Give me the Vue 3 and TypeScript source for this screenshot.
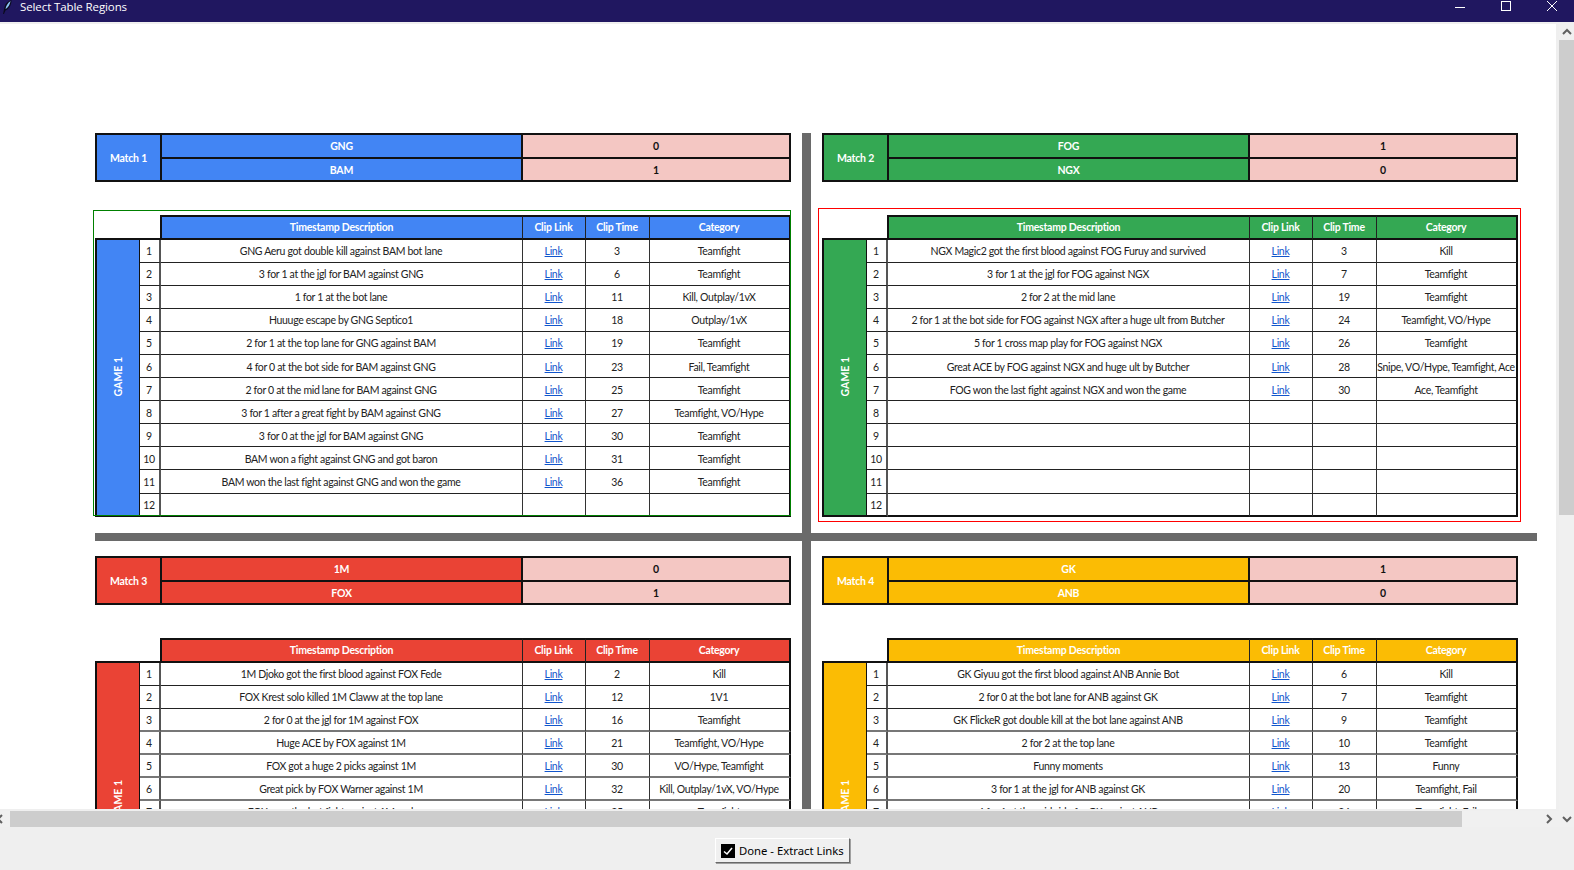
<script setup lang="ts">
interface Row {
  desc: string
  time: number
  cat: string
}

interface Match {
  label: string
  color: string
  teams: [string, number][]
  rows: Row[]
  outline?: 'saved' | 'active'
}

const rowNumbers = Array.from({ length: 12 }, (_, i) => i + 1)

const matches: Match[] = [
  {
    label: 'Match 1',
    color: '#4285f4',
    outline: 'saved',
    teams: [['GNG', 0], ['BAM', 1]],
    rows: [
      { desc: 'GNG Aeru got double kill against BAM bot lane', time: 3, cat: 'Teamfight' },
      { desc: '3 for 1 at the jgl for BAM against GNG', time: 6, cat: 'Teamfight' },
      { desc: '1 for 1 at the bot lane', time: 11, cat: 'Kill, Outplay/1vX' },
      { desc: 'Huuuge escape by GNG Septico1', time: 18, cat: 'Outplay/1vX' },
      { desc: '2 for 1 at the top lane for GNG against BAM', time: 19, cat: 'Teamfight' },
      { desc: '4 for 0 at the bot side for BAM against GNG', time: 23, cat: 'Fail, Teamfight' },
      { desc: '2 for 0 at the mid lane for BAM against GNG', time: 25, cat: 'Teamfight' },
      { desc: '3 for 1 after a great fight by BAM against GNG', time: 27, cat: 'Teamfight, VO/Hype' },
      { desc: '3 for 0 at the jgl for BAM against GNG', time: 30, cat: 'Teamfight' },
      { desc: 'BAM won a fight against GNG and got baron', time: 31, cat: 'Teamfight' },
      { desc: 'BAM won the last fight against GNG and won the game', time: 36, cat: 'Teamfight' },
    ],
  },
  {
    label: 'Match 2',
    color: '#34a853',
    outline: 'active',
    teams: [['FOG', 1], ['NGX', 0]],
    rows: [
      { desc: 'NGX Magic2 got the first blood against FOG Furuy and survived', time: 3, cat: 'Kill' },
      { desc: '3 for 1 at the jgl for FOG against NGX', time: 7, cat: 'Teamfight' },
      { desc: '2 for 2 at the mid lane', time: 19, cat: 'Teamfight' },
      { desc: '2 for 1 at the bot side for FOG against NGX after a huge ult from Butcher', time: 24, cat: 'Teamfight, VO/Hype' },
      { desc: '5 for 1 cross map play for FOG against NGX', time: 26, cat: 'Teamfight' },
      { desc: 'Great ACE by FOG against NGX and huge ult by Butcher', time: 28, cat: 'Snipe, VO/Hype, Teamfight, Ace' },
      { desc: 'FOG won the last fight against NGX and won the game', time: 30, cat: 'Ace, Teamfight' },
    ],
  },
  {
    label: 'Match 3',
    color: '#ea4335',
    teams: [['1M', 0], ['FOX', 1]],
    rows: [
      { desc: '1M Djoko got the first blood against FOX Fede', time: 2, cat: 'Kill' },
      { desc: 'FOX Krest solo killed 1M Claww at the top lane', time: 12, cat: '1V1' },
      { desc: '2 for 0 at the jgl for 1M against FOX', time: 16, cat: 'Teamfight' },
      { desc: 'Huge ACE by FOX against 1M', time: 21, cat: 'Teamfight, VO/Hype' },
      { desc: 'FOX got a huge 2 picks against 1M', time: 30, cat: 'VO/Hype, Teamfight' },
      { desc: 'Great pick by FOX Warner against 1M', time: 32, cat: 'Kill, Outplay/1vX, VO/Hype' },
      { desc: 'FOX won the last fight against 1M and won', time: 35, cat: 'Teamfight' },
    ],
  },
  {
    label: 'Match 4',
    color: '#fbbc04',
    teams: [['GK', 1], ['ANB', 0]],
    rows: [
      { desc: 'GK Giyuu got the first blood against ANB Annie Bot', time: 6, cat: 'Kill' },
      { desc: '2 for 0 at the bot lane for ANB against GK', time: 7, cat: 'Teamfight' },
      { desc: 'GK FlickeR got double kill at the bot lane against ANB', time: 9, cat: 'Teamfight' },
      { desc: '2 for 2 at the top lane', time: 10, cat: 'Teamfight' },
      { desc: 'Funny moments', time: 13, cat: 'Funny' },
      { desc: '3 for 1 at the jgl for ANB against GK', time: 20, cat: 'Teamfight, Fail' },
      { desc: '4 for 1 at the mid side for GK against ANB', time: 24, cat: 'Teamfight, Fail' },
    ],
  },
]

// the lower tables were captured scaled, their later row lines come out thick and grey
function rowClass(matchIndex: number, n: number) {
  return { bottom: n === 12, soft: matchIndex > 1 && n > 2 }
}
</script>

<template>
  <div class="window">
    <header class="titlebar">
      <svg class="feather" width="10" height="14" viewBox="0 0 10 14">
        <path d="M1 14 L2.5 7 C3.5 3 6 1 9.5 0 C9.5 4 8 8.5 3.5 10.5 L2 14 Z" fill="#0b0b20" />
        <path d="M3.5 9 C4 6 5.5 3 8.5 1 C8 3.5 7 7 3.5 9 Z" fill="#8cc4f5" />
      </svg>
      <span class="title">Select Table Regions</span>
      <div class="controls">
        <svg width="10" height="10" viewBox="0 0 10 10"><path d="M0 6.5H10" stroke="#fff" /></svg>
        <svg width="10" height="10" viewBox="0 0 10 10"><rect x="0.5" y="0.5" width="9" height="9" fill="none" stroke="#fff" /></svg>
        <svg width="10" height="10" viewBox="0 0 10 10"><path d="M0 0L10 10M10 0L0 10" stroke="#fff" /></svg>
      </div>
    </header>

    <div class="workspace">
      <div class="main">
        <div class="viewport">
          <div class="sheet">
            <section
              v-for="(m, i) in matches"
              :key="m.label"
              class="panel"
              :style="{ '--tone': m.color }"
            >
              <div class="summary">
                <div class="match-label">{{ m.label }}</div>
                <template v-for="t in m.teams" :key="t[0]">
                  <div class="team">{{ t[0] }}</div>
                  <div class="score">{{ t[1] }}</div>
                </template>
              </div>

              <div class="board">
                <div class="corner"></div>
                <div class="head first">Timestamp Description</div>
                <div class="head">Clip Link</div>
                <div class="head">Clip Time</div>
                <div class="head last">Category</div>
                <div class="game"><span>GAME 1</span></div>
                <template v-for="n in rowNumbers" :key="n">
                  <div class="cell num" :class="rowClass(i, n)">{{ n }}</div>
                  <div class="cell" :class="rowClass(i, n)">{{ m.rows[n - 1]?.desc }}</div>
                  <div class="cell" :class="rowClass(i, n)">
                    <a v-if="m.rows[n - 1]" class="link">Link</a>
                  </div>
                  <div class="cell" :class="rowClass(i, n)">{{ m.rows[n - 1]?.time }}</div>
                  <div class="cell last" :class="rowClass(i, n)">{{ m.rows[n - 1]?.cat }}</div>
                </template>
              </div>

              <div v-if="m.outline" class="outline" :class="m.outline"></div>
            </section>
            <div class="rule-v"></div>
            <div class="rule-h"></div>
          </div>
        </div>
        <div class="hbar">
          <svg class="arrow-left" width="8" height="10" viewBox="0 0 8 10"><path d="M6 1L2 5L6 9" fill="none" stroke="#606060" stroke-width="2" /></svg>
          <div class="hthumb"></div>
          <svg class="arrow-right" width="8" height="10" viewBox="0 0 8 10"><path d="M2 1L6 5L2 9" fill="none" stroke="#606060" stroke-width="2" /></svg>
        </div>
      </div>
      <div class="vbar">
        <div class="vcap">
          <svg width="10" height="8" viewBox="0 0 10 8"><path d="M1 6L5 2L9 6" fill="none" stroke="#606060" stroke-width="2" /></svg>
        </div>
        <div class="vthumb"></div>
        <div class="vrest">
          <svg width="10" height="8" viewBox="0 0 10 8"><path d="M1 2L5 6L9 2" fill="none" stroke="#606060" stroke-width="2" /></svg>
        </div>
      </div>
    </div>

    <footer class="footer">
      <button class="extract" type="button">
        <svg width="14" height="14" viewBox="0 0 14 14">
          <rect width="14" height="14" fill="#000" />
          <path d="M3 7.5L6 10L11 4" fill="none" stroke="#fff" stroke-width="1.5" />
        </svg>
        <span>Done - Extract Links</span>
      </button>
    </footer>
  </div>
</template>

<style>
html,
body {
  margin: 0;
  overflow: hidden;
}
</style>

<style scoped>
.window {
  width: 1574px;
  height: 870px;
  display: flex;
  flex-direction: column;
  background: #efefef;
  overflow: hidden;
  font-family: Lato, "Liberation Sans", sans-serif;
}

.titlebar {
  flex: 0 0 22px;
  display: flex;
  align-items: flex-start;
  background: #201760;
  color: #fff;
}

.feather {
  margin-left: 2px;
}

.title {
  margin-left: 8px;
  font-family: "Open Sans", sans-serif;
  font-size: 11.5px;
  letter-spacing: -0.1px;
  line-height: 14px;
}

.controls {
  margin-left: auto;
  display: flex;
  gap: 36px;
  padding: 1px 17px 0 0;
}

.workspace {
  flex: 0 0 803px;
  margin-top: 2px;
  display: flex;
}

.main {
  width: 1559px;
  display: flex;
  flex-direction: column;
}

.viewport {
  width: 1556px;
  height: 785px;
  background: #fff;
  overflow: hidden;
}

.sheet {
  display: grid;
  grid-template-columns: 696px 31px 696px 19px;
  grid-template-rows: 400px 8px auto;
  padding: 109px 0 0 95px;
}

.panel {
  position: relative;
}

.panel:nth-of-type(1) {
  grid-area: 1 / 1;
}

.panel:nth-of-type(2) {
  grid-area: 1 / 3;
}

.panel:nth-of-type(3) {
  grid-area: 3 / 1;
  margin-top: 15px;
}

.panel:nth-of-type(4) {
  grid-area: 3 / 3;
  margin-top: 15px;
}

.summary {
  box-sizing: border-box;
  height: 49px;
  display: grid;
  grid-template-columns: 65px 361px 266px;
  grid-template-rows: 24px 21px;
  border: 2px solid #111;
  font-size: 10.5px;
  font-weight: 700;
  letter-spacing: -0.2px;
}

.match-label {
  grid-row: 1 / 3;
  display: flex;
  align-items: center;
  justify-content: center;
  background: var(--tone);
  color: #fff;
  border-right: 2px solid #111;
}

.team,
.score {
  display: flex;
  align-items: center;
  justify-content: center;
}

.team {
  background: var(--tone);
  color: #fff;
  border-right: 2px solid #111;
}

.score {
  background: #f4c7c3;
  color: #111;
}

.team:nth-child(2),
.score:nth-child(3) {
  border-bottom: 2px solid #111;
}

.board {
  margin-top: 33px;
  display: grid;
  grid-template-columns: 45px 21px 362px 63px 64px 141px;
  grid-template-rows: 24.5px repeat(12, 23.1px);
  font-size: 10.5px;
  letter-spacing: -0.32px;
  color: #222;
}

.corner {
  grid-column: 1 / 3;
  border-bottom: 2px solid #111;
}

.head {
  display: flex;
  align-items: center;
  justify-content: center;
  padding-right: 1px;
  background: var(--tone);
  color: #fff;
  font-weight: 700;
  letter-spacing: -0.25px;
  border-top: 2px solid #111;
  border-bottom: 2px solid #111;
  border-right: 1px solid #222;
}

.head.first {
  margin-left: -1px;
  border-left: 2px solid #111;
}

.head.last {
  border-right-width: 2px;
  border-right-color: #111;
}

.game {
  grid-row: 2 / 14;
  grid-column: 1;
  display: flex;
  align-items: center;
  justify-content: center;
  background: var(--tone);
  color: #fff;
  font-weight: 700;
  letter-spacing: 0;
  border: 2px solid #111;
  border-top: 0;
  border-right-width: 1px;
}

.game span {
  writing-mode: vertical-rl;
  transform: rotate(180deg);
}

.cell {
  box-sizing: border-box;
  padding: 1px 1px 0 0;
  display: flex;
  align-items: center;
  justify-content: center;
  background: #fff;
  white-space: nowrap;
  overflow: hidden;
  border-right: 1px solid #333;
  border-bottom: 1px solid #222;
}

.cell.num {
  border-right: 2px solid #555;
}

.cell.last {
  border-right: 2px solid #111;
}

.cell.soft {
  border-bottom: 2px solid #777;
}

.cell.bottom {
  border-bottom: 2px solid #111;
}

.link {
  color: #1155cc;
  text-decoration: underline;
}

.outline {
  position: absolute;
  pointer-events: none;
  box-sizing: border-box;
  border: 1px solid;
}

.outline.saved {
  top: 77px;
  left: -2px;
  width: 698px;
  height: 306px;
  border-color: #008000;
}

.outline.active {
  top: 75px;
  left: -4px;
  width: 703px;
  height: 314px;
  border-color: #ff0000;
}

.rule-v {
  grid-column: 2;
  grid-row: 1 / 4;
  justify-self: center;
  width: 9px;
  background: #6a6a6a;
}

.rule-h {
  grid-column: 1 / 5;
  grid-row: 2;
  background: #6a6a6a;
}

.hbar {
  margin-top: 2px;
  height: 16px;
  display: flex;
  align-items: center;
  background: #f0f0f0;
}

.arrow-left {
  margin-left: -4px;
}

.hthumb {
  margin-left: 6px;
  width: 1452px;
  height: 16px;
  background: #cdcdcd;
}

.arrow-right {
  margin-left: auto;
  margin-right: 6px;
}

.vbar {
  width: 15px;
  display: flex;
  flex-direction: column;
  background: #f0f0f0;
}

.vcap {
  height: 16px;
  display: flex;
  align-items: center;
  justify-content: center;
}

.vthumb {
  height: 475px;
  background: #cdcdcd;
}

.vrest {
  flex: 1;
  display: flex;
  align-items: flex-end;
  justify-content: center;
  padding-bottom: 4px;
}

.footer {
  flex: 1;
  display: flex;
  justify-content: center;
  padding: 11px 0 7px 0;
}

.extract {
  box-sizing: border-box;
  width: 135px;
  height: 25px;
  margin-left: -9px;
  padding: 0 0 0 5px;
  display: flex;
  align-items: center;
  gap: 4px;
  white-space: nowrap;
  background: #f0f0f0;
  border: 1px solid;
  border-color: #fff #696969 #696969 #fff;
  box-shadow: 1px 1px 0 #a0a0a0;
  font-family: "Noto Sans", sans-serif;
  font-size: 11.3px;
  color: #000;
}
</style>
